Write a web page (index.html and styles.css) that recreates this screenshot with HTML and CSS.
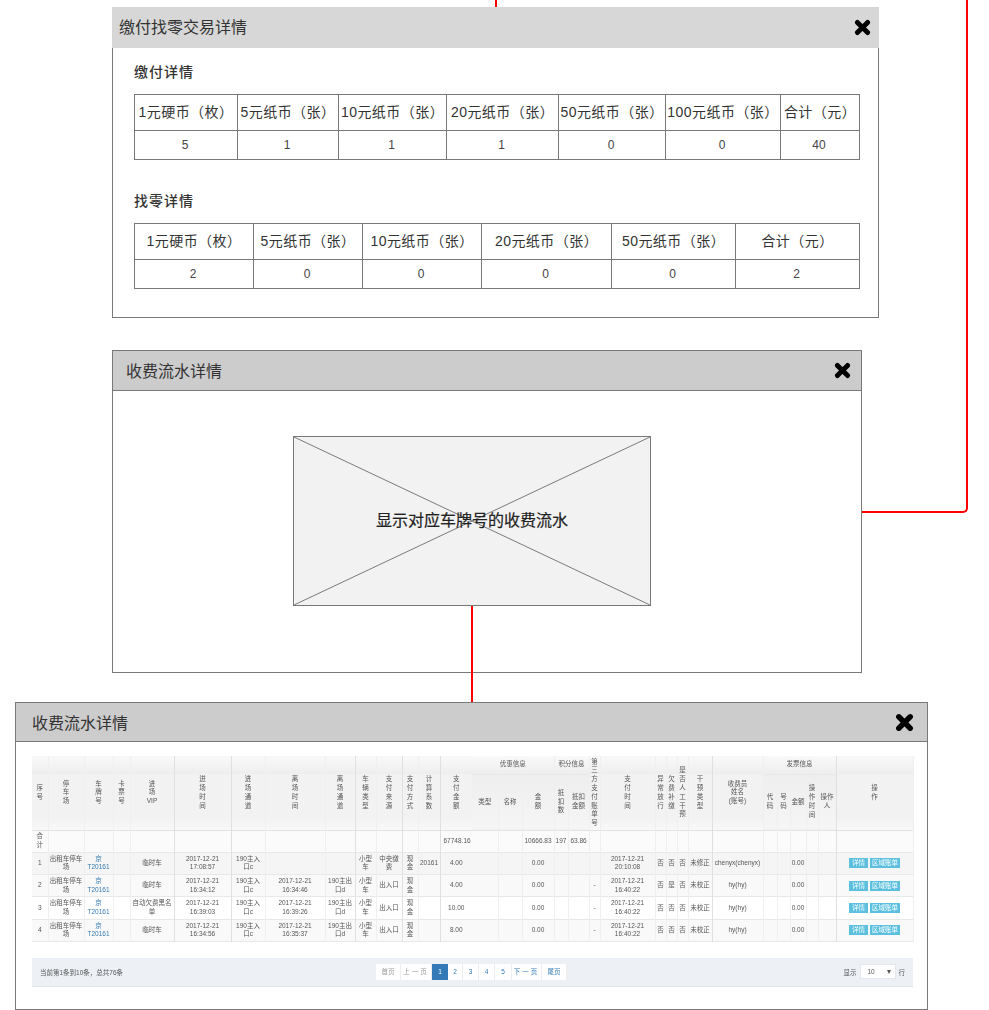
FILE: index.html
```html
<!DOCTYPE html>
<html lang="zh-CN">
<head>
<meta charset="utf-8">
<title>收费流水详情</title>
<link rel="stylesheet" href="styles.css">
</head>
<body>
<main class="canvas">
  <div class="wire wire-top"></div>
  <div class="wire wire-elbow"></div>

  <section class="panel panel-change">
    <header class="panel-head head-plain">
      <h2>缴付找零交易详情</h2>
      <svg class="close" viewBox="0 0 16 16"><path d="M3.2 3.2 12.8 12.8M12.8 3.2 3.2 12.8"/></svg>
    </header>
    <div class="panel-body change-body">
      <h3>缴付详情</h3>
      <table class="grid grid-pay">
        <colgroup><col><col><col><col><col><col><col></colgroup>
        <tr class="r-head"><td>1元硬币（枚）</td><td>5元纸币（张）</td><td>10元纸币（张）</td><td>20元纸币（张）</td><td>50元纸币（张）</td><td>100元纸币（张）</td><td>合计（元）</td></tr>
        <tr class="r-val"><td>5</td><td>1</td><td>1</td><td>1</td><td>0</td><td>0</td><td>40</td></tr>
      </table>
      <h3 class="second">找零详情</h3>
      <table class="grid grid-back">
        <colgroup><col><col><col><col><col><col></colgroup>
        <tr class="r-head"><td>1元硬币（枚）</td><td>5元纸币（张）</td><td>10元纸币（张）</td><td>20元纸币（张）</td><td>50元纸币（张）</td><td>合计（元）</td></tr>
        <tr class="r-val"><td>2</td><td>0</td><td>0</td><td>0</td><td>0</td><td>2</td></tr>
      </table>
    </div>
  </section>

  <section class="panel panel-flow">
    <header class="panel-head head-line">
      <h2>收费流水详情</h2>
      <svg class="close" viewBox="0 0 16 16"><path d="M3.2 3.2 12.8 12.8M12.8 3.2 3.2 12.8"/></svg>
    </header>
    <div class="panel-body flow-body">
      <div class="placeholder">
        <svg class="cross" viewBox="0 0 100 100" preserveAspectRatio="none"><path d="M0 0 100 100M100 0 0 100" vector-effect="non-scaling-stroke"/></svg>
        <span>显示对应车牌号的收费流水</span>
      </div>
    </div>
  </section>

  <div class="wire wire-mid"></div>

  <section class="panel panel-detail">
    <header class="panel-head head-line head-detail">
      <h2>收费流水详情</h2>
      <svg class="close close-lg" viewBox="0 0 16 16"><path d="M3.2 3.2 12.8 12.8M12.8 3.2 3.2 12.8"/></svg>
    </header>
    <div class="panel-body detail-body">
      <div class="table-wrap">
      <table class="records">
        <colgroup>
          <col class="w16"><col class="w36"><col class="w29"><col class="w17"><col class="w44"><col class="w57"><col class="w34"><col class="w60"><col class="w30"><col class="w21"><col class="w26"><col class="w16"><col class="w22"><col class="w32"><col class="w26"><col class="w24"><col class="w32"><col class="w14"><col class="w21"><col class="w11"><col class="w55"><col class="w11"><col class="w11"><col class="w11"><col class="w24"><col class="w51"><col class="w14"><col class="w13"><col class="w16"><col class="w12"><col class="w18"><col class="w77">
        </colgroup>
        <thead>
          <tr class="h1">
            <th rowspan="2">序<br>号</th><th rowspan="2">停<br>车<br>场</th><th rowspan="2">车<br>牌<br>号</th><th rowspan="2">卡<br>票<br>号</th><th rowspan="2" class="s">进<br>场<br>VIP</th><th rowspan="2" class="s">进<br>场<br>时<br>间</th><th rowspan="2">进<br>场<br>通<br>道</th><th rowspan="2">离<br>场<br>时<br>间</th><th rowspan="2" class="s">离<br>场<br>通<br>道</th><th rowspan="2">车<br>辆<br>类<br>型</th><th rowspan="2" class="s">支<br>付<br>来<br>源</th><th rowspan="2">支<br>付<br>方<br>式</th><th rowspan="2" class="s">计<br>算<br>系<br>数</th><th rowspan="2" class="open">支<br>付<br>金<br>额</th>
            <th colspan="3">优惠信息</th><th colspan="2">积分信息</th>
            <th rowspan="2">第<br>三<br>方<br>支<br>付<br>账<br>单<br>号</th><th rowspan="2">支<br>付<br>时<br>间</th><th rowspan="2">异<br>常<br>放<br>行</th><th rowspan="2">欠<br>费<br>补<br>缴</th><th rowspan="2">是<br>否<br>人<br>工<br>干<br>预</th><th rowspan="2" class="s">干<br>预<br>类<br>型</th><th rowspan="2">收费员<br>姓名<br>(账号)</th>
            <th colspan="5" class="s">发票信息</th><th rowspan="2">操<br>作</th>
          </tr>
          <tr class="h2">
            <th class="sub">类型</th><th class="sub">名称</th><th class="sub">金<br>额</th><th class="sub">抵<br>扣<br>数</th><th class="sub">抵扣<br>金额</th><th class="sub">代<br>码</th><th class="sub">号<br>码</th><th class="sub">金额</th><th class="sub">操<br>作<br>时<br>间</th><th class="sub s">操作<br>人</th>
          </tr>
        </thead>
        <tbody>
          <tr class="total">
            <td>合<br>计</td><td></td><td></td><td></td><td class="s"></td><td class="s"></td><td></td><td></td><td class="s"></td><td></td><td class="s"></td><td></td><td class="s"></td><td class="sum open">67748.16</td><td></td><td></td><td>10666.83</td><td>197</td><td>63.86</td><td></td><td></td><td></td><td></td><td></td><td class="s"></td><td></td><td></td><td></td><td></td><td></td><td class="s"></td><td></td>
          </tr>
          <tr class="row-a">
            <td>1</td><td>出租车停车场</td><td><a>京<br>T20161</a></td><td></td><td class="s">临时车</td><td class="s">2017-12-21<br>17:08:57</td><td>190主入<br>口c</td><td></td><td class="s"></td><td>小型<br>车</td><td class="s">中央缴<br>费</td><td>现<br>金</td><td class="s">20161</td><td class="open">4.00</td><td></td><td></td><td>0.00</td><td></td><td></td><td></td><td>2017-12-21<br>20:10:08</td><td>否</td><td>否</td><td>否</td><td class="s">未修正</td><td class="nw">chenyx(chenyx)</td><td></td><td></td><td>0.00</td><td></td><td class="s"></td><td><span class="btns"><span class="btn">详情</span><span class="btn wide">区域账单</span></span></td>
          </tr>
          <tr class="row-b">
            <td>2</td><td>出租车停车场</td><td><a>京<br>T20161</a></td><td></td><td class="s">临时车</td><td class="s">2017-12-21<br>16:34:12</td><td>190主入<br>口c</td><td>2017-12-21<br>16:34:46</td><td class="s">190主出<br>口d</td><td>小型<br>车</td><td class="s">出入口</td><td>现<br>金</td><td class="s"></td><td class="open">4.00</td><td></td><td></td><td>0.00</td><td></td><td></td><td>-</td><td>2017-12-21<br>16:40:22</td><td>否</td><td>是</td><td>否</td><td class="s">未校正</td><td>hy(hy)</td><td></td><td></td><td>0.00</td><td></td><td class="s"></td><td><span class="btns"><span class="btn">详情</span><span class="btn wide">区域账单</span></span></td>
          </tr>
          <tr class="row-c">
            <td>3</td><td>出租车停车场</td><td><a>京<br>T20161</a></td><td></td><td class="s">自动欠费黑名<br>单</td><td class="s">2017-12-21<br>16:39:03</td><td>190主入<br>口c</td><td>2017-12-21<br>16:39:26</td><td class="s">190主出<br>口d</td><td>小型<br>车</td><td class="s">出入口</td><td>现<br>金</td><td class="s"></td><td class="open">10.00</td><td></td><td></td><td>0.00</td><td></td><td></td><td>-</td><td>2017-12-21<br>16:40:22</td><td>否</td><td>否</td><td>否</td><td class="s">未校正</td><td>hy(hy)</td><td></td><td></td><td>0.00</td><td></td><td class="s"></td><td><span class="btns"><span class="btn">详情</span><span class="btn wide">区域账单</span></span></td>
          </tr>
          <tr class="row-b">
            <td>4</td><td>出租车停车场</td><td><a>京<br>T20161</a></td><td></td><td class="s">临时车</td><td class="s">2017-12-21<br>16:34:56</td><td>190主入<br>口c</td><td>2017-12-21<br>16:35:37</td><td class="s">190主出<br>口d</td><td>小型<br>车</td><td class="s">出入口</td><td>现<br>金</td><td class="s"></td><td class="open">8.00</td><td></td><td></td><td>0.00</td><td></td><td></td><td>-</td><td>2017-12-21<br>16:40:22</td><td>否</td><td>否</td><td>否</td><td class="s">未校正</td><td>hy(hy)</td><td></td><td></td><td>0.00</td><td></td><td class="s"></td><td><span class="btns"><span class="btn">详情</span><span class="btn wide">区域账单</span></span></td>
          </tr>
        </tbody>
      </table>
      </div>
      <footer class="pager-bar">
        <span class="count">当前第1条到10条，总共76条</span>
        <nav class="pager">
          <span class="pg w25 muted">首页</span><span class="pg w31 muted spaced">上一页</span><span class="pg w16 on">1</span><span class="pg w15">2</span><span class="pg w16">3</span><span class="pg w16">4</span><span class="pg w17">5</span><span class="pg w30 spaced">下一页</span><span class="pg w25">尾页</span>
        </nav>
        <span class="size">显示<span class="select"><span>10</span><i></i></span>行</span>
      </footer>
    </div>
  </section>
</main>
</body>
</html>
```

FILE: styles.css
```css
* { box-sizing: border-box; }
html, body { margin: 0; padding: 0; height: 1010px; overflow: hidden; background: #fff; }
body { font-family: "Liberation Sans", "Noto Sans CJK SC", sans-serif; color: #333; }
.canvas { position: relative; width: 989px; height: 1010px; overflow: hidden; }

/* connectors on the free canvas */
.wire { position: absolute; border: 0 solid #f00; }
.wire-top { left: 495px; top: 0; width: 2px; height: 7px; background: #f00; }
.wire-elbow { left: 862px; top: -10px; width: 106px; height: 523px; border-width: 0 2px 2px 0; border-bottom-right-radius: 5px; }
.wire-mid { left: 471px; top: 606px; width: 2px; height: 96px; background: #f00; z-index: 2; }

/* windows */
.panel { position: absolute; display: flex; flex-direction: column; }
.panel-change { left: 112px; top: 7px; width: 767px; height: 311px; }
.panel-flow { left: 112px; top: 350px; width: 750px; height: 323px; }
.panel-detail { left: 15px; top: 702px; width: 913px; height: 308px; }

.panel-head { height: 41px; flex: none; display: flex; align-items: center; justify-content: space-between; }
.panel-head h2 { margin: 0; padding-bottom: 2px; font-size: 16px; font-weight: 400; color: #333; }
.head-plain { background: #d7d7d7; padding: 0 8px 0 7px; }
.head-plain h2 { padding-bottom: 4px; }
.head-line { background: #ccc; border: 1px solid #797979; padding: 0 10px 0 13px; }
.head-detail { height: 40px; padding: 0 13px 0 16px; }
.head-detail h2 { padding-bottom: 0; }
.close { width: 17px; height: 17px; fill: none; stroke: #000; stroke-width: 4.6; stroke-linecap: round; }
.close-lg { width: 19px; height: 19px; }
.panel-body { flex: 1; border: 1px solid #797979; border-top: 0; }

/* change window */
.change-body { padding: 14px 0 0 21px; }
h3 { margin: 0 0 12px; font-size: 14px; line-height: 20px; font-weight: 500; letter-spacing: 1px; color: #333; }
h3.second { margin-top: 31px; }
.grid { border-collapse: collapse; table-layout: fixed; width: 725px; font-size: 14px; color: #333; }
.grid td { border: 1px solid #797979; padding: 0; text-align: center; white-space: nowrap; }
.r-head td { height: 36px; padding-bottom: 3px; letter-spacing: .45px; }
.r-val td { height: 29px; font-size: 12px; padding-right: 2px; color: #444; }
.grid-pay col:nth-child(1) { width: 103px; }
.grid-pay col:nth-child(2) { width: 101px; }
.grid-pay col:nth-child(3) { width: 108px; }
.grid-pay col:nth-child(4) { width: 112px; }
.grid-pay col:nth-child(5) { width: 107px; }
.grid-pay col:nth-child(6) { width: 115px; }
.grid-pay col:nth-child(7) { width: 79px; }
.grid-back col:nth-child(1) { width: 119px; }
.grid-back col:nth-child(2) { width: 109px; }
.grid-back col:nth-child(3) { width: 119px; }
.grid-back col:nth-child(4) { width: 130px; }
.grid-back col:nth-child(5) { width: 124px; }
.grid-back col:nth-child(6) { width: 124px; }

/* placeholder */
.flow-body { padding: 45px 0 0 180px; }
.placeholder { position: relative; width: 358px; height: 170px; background: #f2f2f2; border: 1px solid #797979; display: flex; align-items: center; justify-content: center; padding-bottom: 4px; }
.cross { position: absolute; inset: 0; width: 100%; height: 100%; fill: none; stroke: #797979; stroke-width: 1; }
.placeholder span { position: relative; font-size: 16px; font-weight: 400; color: #222; -webkit-text-stroke: .2px #222; }

/* records window */
.detail-body { padding: 14px 0 0 16px; }
.table-wrap { width: 881px; filter: blur(.4px); }
.records { border-collapse: collapse; table-layout: fixed; width: 881px; font-size: 6.5px; line-height: 8.8px; color: #555; }
.records th, .records td { padding: 0; text-align: center; vertical-align: middle; font-weight: 400; border-right: 1px solid #efefef; overflow: visible; }
.records .s { border-right: 1px solid #e0e0e0; }
.records .open { border-right: 0; }
.records thead { background: linear-gradient(#f9f9f9 0, #eee 18px, #f2f2f2 18px, #f2f2f2 62px, #f8f8f8 74px); }
.records thead { border-bottom: 1px solid #e2e2e2; }
.records .h1 { height: 18px; }
.records .h2 { height: 56px; }
.records .sub { background: linear-gradient(#eee, #f5f5f5); border-top: 1px solid #e8e8e8; }
.records tbody tr { height: 22.3px; border-bottom: 1px solid #e8e8e8; }
.records a { color: #337ab7; }
.total { background: #fbfbfb; height: 22px; }
.row-a { background: #f5f5f5; }
.row-b { background: #f9f9f9; }
.row-c { background: #fff; }
.records td.sum { text-align: left; padding-left: 3px; white-space: nowrap; }
.records td.nw { white-space: nowrap; }
.w16 { width: 16px; } .w36 { width: 36px; } .w29 { width: 29px; } .w17 { width: 17px; }
.w44 { width: 44px; } .w57 { width: 57px; } .w34 { width: 34px; } .w60 { width: 60px; }
.w30 { width: 30px; } .w21 { width: 21px; } .w26 { width: 26px; } .w22 { width: 22px; }
.w32 { width: 32px; } .w24 { width: 24px; } .w14 { width: 14px; } .w11 { width: 11px; }
.w55 { width: 55px; } .w51 { width: 51px; } .w13 { width: 13px; } .w12 { width: 12px; }
.w18 { width: 18px; } .w77 { width: 77px; }
.btns { display: flex; justify-content: center; gap: 2px; }
.btn { display: block; width: 19px; height: 10px; line-height: 10px; background: #5bc0de; color: #fff; font-size: 6.5px; }
.btn.wide { width: 30px; }

/* pager */
.pager-bar { margin-top: 16px; width: 881px; height: 29px; background: #edf0f5; border-bottom: 1px solid #e0e3e8; display: flex; align-items: center; position: relative; font-size: 6.5px; color: #555; filter: blur(.3px); padding: 0 8px; }
.count { width: 336px; flex: none; }
.pager { display: flex; height: 16px; background: #fff; flex: none; }
.pg { display: block; flex: none; line-height: 16px; text-align: center; color: #337ab7; border-right: 1px solid #eee; }
.pg.w25 { width: 25px; } .pg.w31 { width: 31px; } .pg.w16 { width: 16px; } .pg.w15 { width: 15px; }
.pg.w17 { width: 17px; } .pg.w30 { width: 30px; }
.pg.spaced { letter-spacing: 2px; }
.pg.muted { color: #999; }
.pg.on { background: #337ab7; color: #fff; border-right: 0; }
.size { margin-left: auto; display: flex; align-items: center; gap: 3px; }
.select { width: 36px; height: 15px; background: #fff; border: 1px solid #e4e7ec; display: flex; align-items: center; justify-content: space-between; padding: 0 4px 0 7px; }
.select i { width: 0; height: 0; border: 2.5px solid transparent; border-top: 4px solid #555; border-bottom: 0; }
```
